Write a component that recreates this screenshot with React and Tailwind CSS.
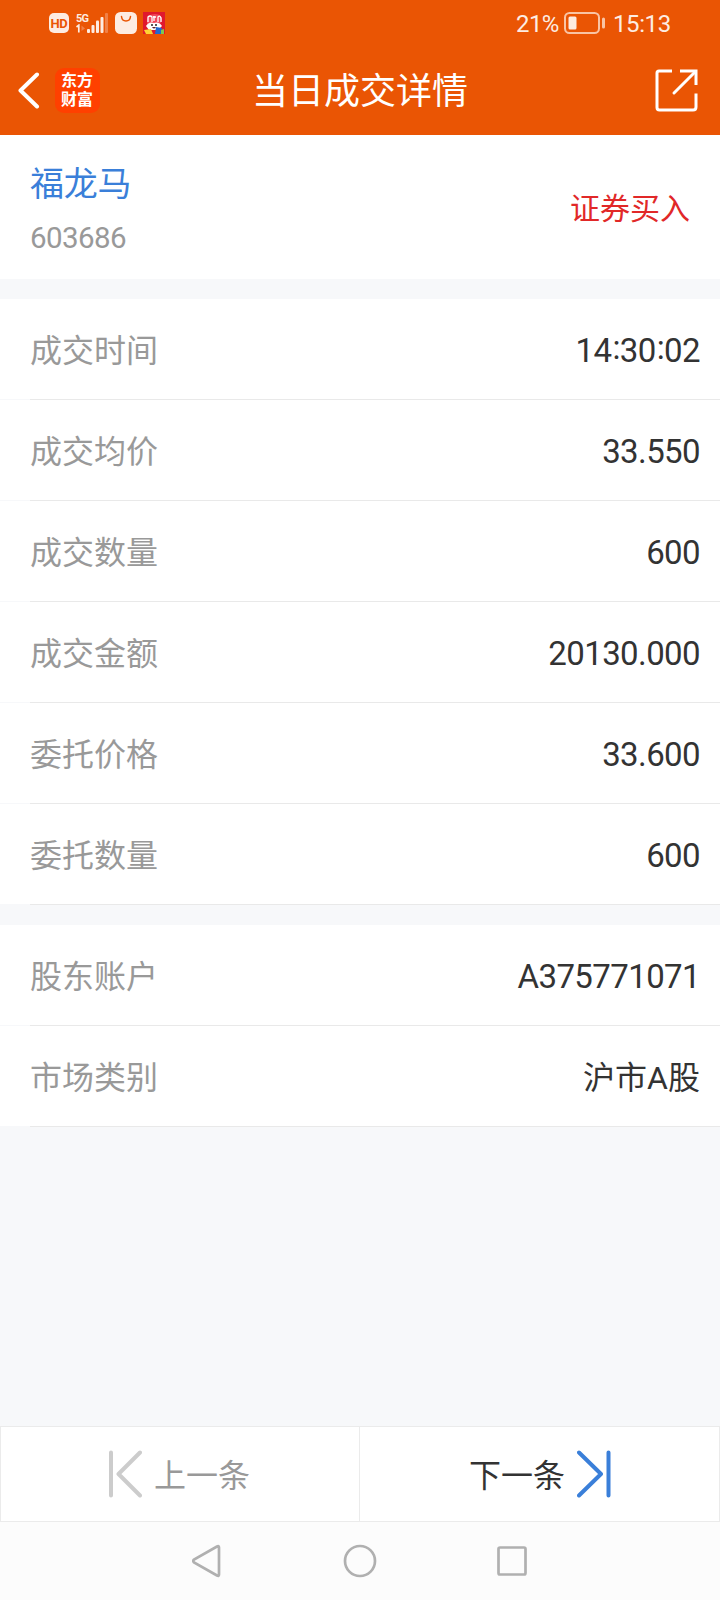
import React from "react";

const tradeRows = [
  { label: "成交时间", value: "14:30:02" },
  { label: "成交均价", value: "33.550" },
  { label: "成交数量", value: "600" },
  { label: "成交金额", value: "20130.000" },
  { label: "委托价格", value: "33.600" },
  { label: "委托数量", value: "600" },
];

const accountRows = [
  { label: "股东账户", value: "A375771071" },
  { label: "市场类别", value: "沪市A股" },
];

function StatusBar() {
  return (
    <div className="flex h-[46px] items-center pl-[49px] pr-[49px] text-[#fdece2]">
      <div className="flex h-5 w-5 items-center justify-center rounded-[5px] bg-[#fdece2] text-[13px] font-bold leading-none tracking-tight text-[#ea5504]">
        HD
      </div>

      {/* Signal */}
      <div className="ml-[7px] flex h-5 w-8 items-end">
        <div className="flex w-[10px] flex-col">
          <span className="text-[11px] font-bold leading-[11px] tracking-[-0.8px]">5G</span>
          <svg className="h-[9px] w-[10px]" viewBox="0 0 10 9">
            <path d="M0.5 3 L2.8 1.2 V8.5" fill="none" stroke="#fdece2" strokeWidth="1.7" />
            <path d="M5.5 1.5 L9 4.5 L5.5 7Z" fill="#f08148" />
          </svg>
        </div>
        <svg className="h-5 w-[22px]" viewBox="0 0 22 20">
          <g fill="#fdece2">
            <rect x="1" y="16" width="3" height="4" rx="1" />
            <rect x="5.5" y="12" width="3" height="8" rx="1" />
            <rect x="10" y="7.5" width="3" height="12.5" rx="1" />
            <rect x="14.5" y="4" width="3" height="16" rx="1" />
          </g>
          <rect x="19" y="0" width="3" height="20" rx="1" fill="#f08148" />
        </svg>
      </div>

      {/* Notification icons */}
      <svg className="ml-[7px] h-[22px] w-[22px]" viewBox="0 0 22 22">
        <rect width="22" height="22" rx="5.5" fill="#fdece2" />
        <path d="M6.5 4.5 Q7 9 11 9 T15.5 4.5" fill="none" stroke="#ea5504" strokeWidth="1.5" strokeLinecap="round" />
      </svg>
      <svg className="ml-[6px] h-[22px] w-[22px]" viewBox="0 0 22 22">
        <rect width="22" height="22" fill="#e0182d" />
        <path d="M4 8 Q5 2 12 2 T19 8 L17 12 H4Z" fill="#f04a5c" />
        <path d="M5 10 V5 Q7 3 9 5 V10 M11 4 V9 M10 5 H13 M15 10 V5 Q17 3 18 6 V10" fill="none" stroke="#fff" strokeWidth="1.3" />
        <path d="M3 14 Q6 9 11 11 Q16 9 19 14 L15 18 H6Z" fill="#fff" />
        <path d="M8 13 H10 M12 13 H14" stroke="#222" strokeWidth="1.5" />
        <path d="M9 15 Q11 18 13 15Z" fill="#5a2730" />
        <path d="M1 18 L8 17 L10 22 H3Z" fill="#ffd332" />
        <path d="M13 15 L19 16 L18 22 H12Z" fill="#2369cf" />
        <path d="M18 18 L21 17 V22 H18Z" fill="#7ec850" />
      </svg>

      <div className="ml-auto flex items-center text-[24px] leading-none">
        <span className="w-[44px] pt-px tracking-[-0.6px]">21%</span>
        <svg className="ml-[4px] h-[22px] w-[42px]" viewBox="0 0 42 22">
          <rect x="1" y="1" width="34" height="20" rx="4.5" fill="none" stroke="#f9c4a4" strokeWidth="2" />
          <rect x="4.5" y="4.5" width="8" height="13" rx="1.5" fill="#fdece2" />
          <rect x="38" y="5.5" width="3" height="11" rx="1.5" fill="#f9c4a4" />
        </svg>
        <span className="ml-[7px] w-[58px] whitespace-nowrap pt-px tracking-[-0.4px]">15:13</span>
      </div>
    </div>
  );
}

function Header() {
  return (
    <header className="h-[135px] bg-[#ea5504]">
      <StatusBar />
      <div className="grid h-[88px] grid-cols-[1fr_auto_1fr] items-center px-[18px]">
        <div className="flex items-center">
          <svg className="h-[37px] w-[22px]" viewBox="0 0 22 37">
            <path d="M19 2.5 L2.5 18.5 L19 34.5" fill="none" stroke="#fff" strokeWidth="4" strokeLinecap="round" strokeLinejoin="round" />
          </svg>
          <div className="ml-[15px] flex h-[45px] w-[45px] items-center justify-center rounded-[9px] bg-[#ff4000] pb-[2px]">
            <span className="w-[33px] break-all font-['Noto_Sans_CJK_SC'] text-[16px] font-bold leading-[19.5px] text-white">
              东方财富
            </span>
          </div>
        </div>
        <h1 className="pt-[4px] text-[36px] leading-[44px] text-white">当日成交详情</h1>
        <svg className="mr-[4px] h-[43px] w-[43px] justify-self-end" viewBox="0 0 43 43">
          <g fill="none" stroke="#fff" strokeWidth="3">
            <path d="M17 2 H4 Q2 2 2 4 V38.5 Q2 41 4.5 41 H38 Q41 41 41 38 V24.5" />
            <path d="M25 2 H41 V16" />
            <path d="M40 3 L19 24" strokeLinecap="round" />
          </g>
        </svg>
      </div>
    </header>
  );
}

function DetailRow({ label, value }) {
  // Latin-only values are set a touch larger than Chinese ones
  const isNumeric = /^[\w.:]+$/.test(value);

  return (
    <div className="bg-white">
      <div className="flex h-[100px] items-center justify-between pl-[30px] pr-5 pt-[3px] text-[32px] leading-[40px]">
        <span className="text-[#999999]">{label}</span>
        <span className={isNumeric ? "text-[33px] tracking-[-0.6px] text-[#333333]" : "text-[#333333]"}>
          {value.split(":").map((part, i) => (
            <React.Fragment key={i}>
              {i > 0 && <span className="inline-block -translate-y-[3px] pl-px">:</span>}
              {part}
            </React.Fragment>
          ))}
        </span>
      </div>
      <div className="flex h-px bg-[#f7f8fa]">
        <div className="ml-[30px] flex-1 bg-[#e9e9e9]" />
      </div>
    </div>
  );
}

export default function App() {
  return (
    <div className="flex h-[1600px] w-[720px] flex-col overflow-hidden bg-[#f7f8fa] font-['Roboto','Noto_Sans_CJK_SC',sans-serif]">
      <Header />

      <section className="flex h-36 items-center justify-between bg-white px-[30px] pt-[3px]">
        <div>
          <div className="text-[34px] leading-[48px] tracking-[-0.3px] text-[#3a7fd9]">福龙马</div>
          <div className="mt-[10px] text-[29.5px] leading-[40px] tracking-[-0.6px] text-[#999999]">603686</div>
        </div>
        <div className="text-[30px] leading-[40px] text-[#e12828]">证券买入</div>
      </section>

      <section className="mt-5">
        {tradeRows.map((row) => (
          <DetailRow key={row.label} label={row.label} value={row.value} />
        ))}
      </section>

      <section className="mt-5">
        {accountRows.map((row) => (
          <DetailRow key={row.label} label={row.label} value={row.value} />
        ))}
      </section>

      {/* Previous / next record */}
      <div className="mt-auto grid h-24 grid-cols-[358px_1fr] border border-[#ebebeb] bg-white text-[32px] leading-[40px]">
        <button className="flex items-center pl-[107px] text-[#999999]">
          <svg className="h-[48px] w-[34px]" viewBox="0 0 34 48">
            <path d="M3 2.5 V45.5 M32 2.5 L10.5 24 L32 45.5" fill="none" stroke="#cccccc" strokeWidth="4" strokeLinecap="round" strokeLinejoin="round" />
          </svg>
          <span className="ml-[12px] pt-[4px]">上一条</span>
        </button>
        <button className="flex items-center border-l border-[#ebebeb] pl-[109px] text-[#333333]">
          <span className="pt-[4px]">下一条</span>
          <svg className="ml-[12px] h-[48px] w-[34px]" viewBox="0 0 34 48">
            <path d="M31.5 2.5 V45.5 M2 2.5 L24 24 L2 45.5" fill="none" stroke="#3a7fd9" strokeWidth="4" strokeLinecap="round" strokeLinejoin="round" />
          </svg>
        </button>
      </div>

      {/* System navigation */}
      <nav className="flex h-[78px] items-center justify-center gap-[119px] bg-[#fcfcfc]">
        <svg className="h-[34px] w-8" viewBox="0 0 32 34">
          <path d="M27 3.5 V30.5 Q27 32.5 25 31.5 L2 18.5 Q0.5 17 2 15.5 L25 2.5 Q27 1.5 27 3.5Z" fill="none" stroke="#b0b0b0" strokeWidth="2.7" />
        </svg>
        <svg className="h-[34px] w-[34px]" viewBox="0 0 34 34">
          <circle cx="17" cy="17" r="15" fill="none" stroke="#b0b0b0" strokeWidth="2.7" />
        </svg>
        <svg className="h-8 w-8" viewBox="0 0 32 32">
          <rect x="2.5" y="2.5" width="27" height="27" rx="1.5" fill="none" stroke="#b0b0b0" strokeWidth="2.7" />
        </svg>
      </nav>
    </div>
  );
}
